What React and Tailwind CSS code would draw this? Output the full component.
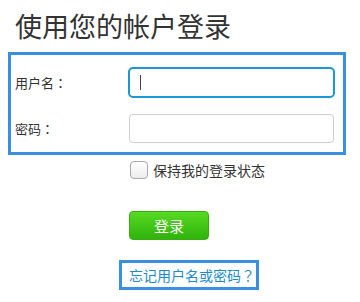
const Punct = ({ children }) => (
  <span style={{ fontFamily: "'Noto Sans CJK TC', sans-serif" }}>{children}</span>
);

export default function App() {
  return (
    <div
      className="w-[360px] h-[302px] bg-white text-[#333]"
      style={{ fontFamily: "'Noto Sans CJK SC', 'Liberation Sans', sans-serif" }}
    >
      {/* Title */}
      <div className="h-[52px] flex items-center pl-[15px]">
        <h1 className="text-[27px] leading-[30px] font-normal text-[#333]">使用您的帐户登录</h1>
      </div>

      {/* Credentials box */}
      <div className="ml-2 w-[338px] h-[103px] border-[3px] border-[#3b8fe0] flex flex-col">
        <div className="flex items-center mt-[12px] h-[31px]">
          <label className="w-[117px] pl-1 text-[13px] leading-none">用户名<Punct>：</Punct></label>
          <div className="w-[207px] h-[31px] rounded-[5px] border-2 border-[#1a98d5] bg-white flex items-center pl-[10px]">
            <div className="w-px h-[15px] bg-[#444]" />
          </div>
        </div>
        <div className="flex items-center mt-[16px] h-[29px]">
          <label className="w-[118px] pl-1 text-[13px] leading-none">密码<Punct>：</Punct></label>
          <input
            type="password"
            className="w-[205px] h-[29px] rounded-[4px] border border-[#cccccc] bg-white outline-none px-2"
          />
        </div>
      </div>

      {/* Remember me */}
      <div className="flex items-center mt-[6px] ml-[130px] h-[18px]">
        <div className="w-[18px] h-[18px] rounded-[4px] border border-[#a9a9a9] bg-gradient-to-b from-white to-[#ececec]" />
        <span className="ml-[5px] text-[14px] leading-none text-[#333]">保持我的登录状态</span>
      </div>

      {/* Login button */}
      <div className="ml-[129px] mt-[32px]">
        <button className="w-[80px] h-[29px] rounded-[4px] border border-[#39ad10] bg-gradient-to-b from-[#55da22] to-[#30b30a] text-white text-[15px] leading-none flex items-center justify-center">
          登录
        </button>
      </div>

      {/* Forgot link */}
      <div className="ml-[119px] mt-[20px] w-[140px] h-[30px] border-[3px] border-[#3b8fe0] flex items-center pl-[7px]">
        <a className="text-[14px] leading-none text-[#1a8bd0] whitespace-nowrap">忘记用户名或密码<Punct>？</Punct></a>
      </div>
    </div>
  );
}
